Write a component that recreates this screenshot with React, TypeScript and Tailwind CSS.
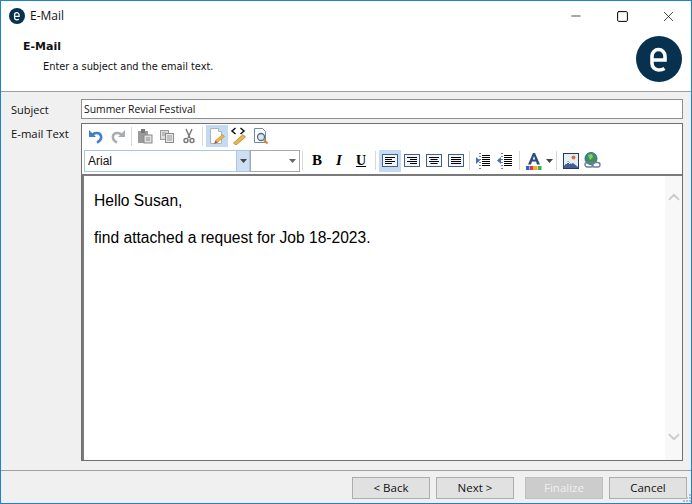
import React from 'react';
import { Minus, Square, X, ChevronUp, ChevronDown } from 'lucide-react';

// company logo, a round badge with the bent "e" mark
const Logo: React.FC<{ className: string }> = ({ className }) => (
  <svg viewBox="0 0 46 46" className={`${className} shrink-0`}>
    <circle cx="23" cy="23" r="23" fill="#07314f" />
    <path d="M16 24H29V20a6.500 6.500 0 0 0-13 0V27.500a6.500 6.500 0 0 0 6.500 6.500c2.500 0 4.500-.5 6-1.500" fill="none" stroke="#fff" strokeWidth="3.600" />
  </svg>
);

const Sep: React.FC<{ cls?: string }> = ({ cls = 'mx-[2px]' }) => <div className={`w-px h-[19px] bg-[#d8d8d8] shrink-0 ${cls}`} />;

// toolbar cell, 22px square with optional pressed state
const Tool: React.FC<{ on?: boolean; children: React.ReactNode }> = ({ on, children }) => (
  <div className={`w-[22px] h-[22px] flex items-center justify-center shrink-0 ${on ? 'bg-[#c4daf3]' : ''}`}>{children}</div>
);

const UndoIcon: React.FC<{ color: string; flip?: boolean }> = ({ color, flip }) => (
  <svg width="16" height="16" viewBox="0 0 16 16" className={flip ? '-scale-x-100' : ''}>
    <path d="M1 2v7h7z" fill={color} />
    <path d="M4 7.500c2-3.500 8-3.500 9 .5 .6 2.500-1 5-4 6.500" fill="none" stroke={color} strokeWidth="2.600" />
  </svg>
);
const PasteIcon = () => (
  <svg width="16" height="16" viewBox="0 0 16 16">
    <rect x="1" y="3" width="10" height="12" fill="#9a9a9a" />
    <rect x="4" y="1" width="4" height="4" fill="#777" />
    <rect x="7" y="7" width="8" height="8" fill="#e0e0e0" stroke="#8a8a8a" />
    <path d="M9 10h4M9 12h4" stroke="#8a8a8a" />
  </svg>
);
const CopyIcon = () => (
  <svg width="16" height="16" viewBox="0 0 16 16">
    <rect x="1.500" y="2.500" width="8" height="9" fill="#ddd" stroke="#999" />
    <rect x="6.500" y="5.500" width="8" height="9" fill="#e6e6e6" stroke="#8a8a8a" />
    <path d="M3 5h4M3 7h3M8 8h5M8 10h5M8 12h5" stroke="#9a9a9a" />
  </svg>
);
const CutIcon = () => (
  <svg width="16" height="16" viewBox="0 0 16 16" fill="none" stroke="#777" strokeWidth="1.400">
    <path d="M5 1l4 9M11 1L7 10" />
    <circle cx="5" cy="12.500" r="2" />
    <circle cx="11" cy="12.500" r="2" />
  </svg>
);
const DesignIcon = () => (
  <svg width="18" height="18" viewBox="0 0 18 18">
    <path d="M2.500 1.500h8l3 3v12h-11z" fill="#fff" stroke="#a8b4c2" />
    <path d="M10.500 1.500v3h3" fill="#e6edf5" stroke="#a8b4c2" />
    <path d="M7.500 13.500l7-6 2 2-7 6z" fill="#eab64a" stroke="#b98a30" strokeWidth="0.600" />
    <path d="M7.500 13.500l-1.500 3.500 3.500-1.500z" fill="#b5432f" />
  </svg>
);
const SourceIcon = () => (
  <svg width="18" height="18" viewBox="0 0 18 18" fill="none">
    <path d="M5.500 1L2 4l3.500 3M10.500 1L14 4l-3.500 3" stroke="#111" strokeWidth="1.500" />
    <path d="M3.500 16l9.500-8.500 2.500 2.500-9.500 8z" fill="#eab64a" stroke="#a97a26" strokeWidth="0.700" />
  </svg>
);
const PreviewIcon = () => (
  <svg width="18" height="18" viewBox="0 0 18 18" fill="none">
    <path d="M2.500 1.500h8l3 3v11h-11z" fill="#fff" stroke="#6d88a8" />
    <circle cx="9" cy="10" r="3.500" fill="#d6e6f5" stroke="#5a6d80" strokeWidth="1.300" />
    <path d="M11.500 12.500l4 4" stroke="#d08a30" strokeWidth="2.200" />
  </svg>
);

const Align: React.FC<{ kind: 'left' | 'right' | 'center' | 'full' }> = ({ kind }) => {
  const paths = {
    left: 'M3 4.500h10M3 6.500h7M3 8.500h10M3 10.500h7',
    right: 'M3 4.500h10M6 6.500h7M3 8.500h10M6 10.500h7',
    center: 'M3 4.500h10M4.500 6.500h7M3 8.500h10M4.500 10.500h7',
    full: 'M3 4.500h10M3 6.500h10M3 8.500h10M3 10.500h10',
  };
  return (
    <svg width="16" height="15" viewBox="0 0 16 15">
      <rect x="0.500" y="1.500" width="15" height="12" fill="#f2f6fb" stroke="#46607e" />
      <path d={paths[kind]} stroke="#000" />
    </svg>
  );
};

const Indent: React.FC<{ out?: boolean }> = ({ out }) => (
  <svg width="16" height="16" viewBox="0 0 16 16">
    <path d="M7 2.500h8M7 4.500h8M7 6.500h8M7 8.500h8M7 10.500h8M7 12.500h8" stroke="#000" />
    <path d="M5 0v16" stroke="#000" strokeDasharray="1 2" />
    <path d={out ? 'M0 7.500l4-3.500v7z' : 'M5 7.500L1 4v7z'} fill="#3c6fd0" />
  </svg>
);

const FontColor = () => (
  <svg width="16" height="18" viewBox="0 0 16 18">
    <path d="M2 12.500L7 1h2l5 11.500h-3l-1-3H6l-1 3z M6.800 7.500h2.400L8 4z" fill="#2b4a80" fillRule="evenodd" />
    <rect x="0" y="14" width="3.500" height="4" fill="#2f5fd0" />
    <rect x="4" y="14" width="3.500" height="4" fill="#e03a3a" />
    <rect x="8" y="14" width="3.500" height="4" fill="#f0b020" />
    <rect x="12" y="14" width="3.500" height="4" fill="#34b44a" />
  </svg>
);
const ImageIcon = () => (
  <svg width="16" height="16" viewBox="0 0 16 16">
    <rect x="0.500" y="0.500" width="15" height="15" fill="#e8eef6" stroke="#1f3a68" />
    <path d="M1 13l4-5 3 3 2-1 5 4v1H1z" fill="#3f5f96" />
    <path d="M3 11l2-2 2 2" stroke="#fff" fill="none" />
    <circle cx="10.500" cy="4.500" r="2" fill="#e0703a" />
  </svg>
);
const LinkIcon = () => (
  <svg width="17" height="17" viewBox="0 0 17 17">
    <circle cx="7" cy="6.500" r="6" fill="#3f8f5a" stroke="#3a6a9a" />
    <path d="M4 3l4-1 1 3-3 3z" fill="#7fd06a" />
    <rect x="1" y="10.500" width="8" height="4.500" rx="2.200" fill="none" stroke="#6a7f9a" strokeWidth="1.400" />
    <rect x="8" y="10.500" width="8" height="4.500" rx="2.200" fill="none" stroke="#6a7f9a" strokeWidth="1.400" />
  </svg>
);

const Caret = ({ color = '#444' }: { color?: string }) => (
  <svg width="7" height="4" viewBox="0 0 7 4"><path d="M0 0h7L3.500 4z" fill={color} /></svg>
);

const Btn: React.FC<{ label: string; disabled?: boolean; cls?: string }> = ({ label, disabled, cls = '' }) => (
  <div className={`w-[78px] h-[22px] border flex items-center justify-center text-[11.500px] ${disabled ? 'bg-[#cccccc] border-[#bfbfbf] text-[#f0f0f0]' : 'bg-[#e1e1e1] border-[#adadad] text-[#111]'} ${cls}`}>
    {label}
  </div>
);

export default function App() {
  return (
    <div className="relative w-[692px] h-[504px] border border-[#1883d7] bg-[#f0f0f0] flex flex-col overflow-hidden font-['Open_Sans',sans-serif] text-[#111]">
      <div className="bg-white h-[91px] border-b border-[#a0a0a0] shrink-0 flex flex-col">
        <div className="h-[30px] flex items-center pl-[8px] shrink-0">
          <Logo className="w-[16px] h-[16px]" />
          <span className="ml-[5px] text-[12px]">E-Mail</span>
          <div className="ml-auto flex items-center">
            <div className="w-[46px] flex justify-center"><Minus size={14} strokeWidth={1.200} className="text-black" /></div>
            <div className="w-[46px] flex justify-center"><Square size={13} strokeWidth={1} absoluteStrokeWidth className="text-black" /></div>
            <div className="w-[46px] flex justify-center"><X size={17} strokeWidth={1} className="text-black" /></div>
          </div>
        </div>
        <div className="flex flex-1 pl-[22px] pr-[9px]">
          <div className="flex-1">
            <div className="text-[11px] font-bold leading-[15px] mt-[8px] font-['DejaVu_Sans',sans-serif]">E-Mail</div>
            <div className="text-[9.800px] leading-[14px] mt-[6px] ml-[20px] font-['DejaVu_Sans',sans-serif]">Enter a subject and the email text.</div>
          </div>
          <Logo className="w-[46px] h-[46px] mt-[5px]" />
        </div>
      </div>

      <div className="flex-1 min-h-0 flex flex-col pl-[10px] pr-[8px] pt-[7px] pb-[9px]">
        <div className="flex items-center h-[20px] shrink-0">
          <span className="w-[70px] text-[11px] pt-[2px]">Subject</span>
          <div className="flex-1 h-full bg-white border border-[#8f8f8f] flex items-center pl-[2px] pt-[1px] text-[10.400px]">Summer Revial Festival</div>
        </div>
        <div className="flex flex-1 min-h-0 mt-[4px]">
          <span className="w-[70px] text-[11.300px] pt-[3px] shrink-0">E-mail Text</span>
          <div className="flex-1 flex flex-col bg-white border border-[#707070] min-w-0">
            <div className="flex items-center h-[24px] pl-[3px] shrink-0">
              <Tool><UndoIcon color="#3d7fd3" /></Tool>
              <Tool><UndoIcon color="#a9adb2" flip /></Tool>
              <Sep />
              <Tool><PasteIcon /></Tool>
              <Tool><CopyIcon /></Tool>
              <Tool><CutIcon /></Tool>
              <Sep cls="ml-[2px] mr-[3px]" />
              <Tool on><DesignIcon /></Tool>
              <Tool><SourceIcon /></Tool>
              <Tool><PreviewIcon /></Tool>
            </div>
            <div className="flex items-center h-[25px] pl-[2px] shrink-0">
              <div className="w-[166px] h-[22px] border border-[#a8c6e8] bg-white flex items-stretch">
                <div className="flex-1 flex items-center pl-[3px] text-[12px] font-['Liberation_Sans',sans-serif]">Arial</div>
                <div className="w-[13px] bg-[#cfdff2] border-l border-[#a8c6e8] flex items-center justify-center"><Caret /></div>
              </div>
              <div className="w-[50px] h-[22px] border border-[#a8a8a8] bg-white flex items-center justify-end pr-[3px]"><Caret color="#666" /></div>
              <Sep cls="ml-[2px] mr-[3px]" />
              <Tool><span className="font-['Liberation_Serif',serif] font-bold text-[15px] text-black">B</span></Tool>
              <Tool><span className="font-['Liberation_Serif',serif] font-bold italic text-[15px] text-black">I</span></Tool>
              <Tool><span className="font-['Liberation_Serif',serif] font-bold underline text-[14px] text-black">U</span></Tool>
              <Sep cls="mx-[3px]" />
              <Tool on><Align kind="left" /></Tool>
              <Tool><Align kind="right" /></Tool>
              <Tool><Align kind="center" /></Tool>
              <Tool><Align kind="full" /></Tool>
              <Sep />
              <Tool><Indent /></Tool>
              <Tool><Indent out /></Tool>
              <Sep cls="mx-[3px]" />
              <Tool><FontColor /></Tool>
              <div className="w-[8px] flex justify-center"><Caret /></div>
              <Sep cls="mx-[3px]" />
              <Tool><ImageIcon /></Tool>
              <div className="-ml-[1px]"><Tool><LinkIcon /></Tool></div>
            </div>
            <div className="flex-1 min-h-0 mt-[1px] border-t-2 border-l-2 border-[#7a7a7a] flex">
              <div className="flex-1 px-[10px] pt-[16px] text-[15.600px] leading-[18px] font-['Liberation_Sans',sans-serif] text-black">
                <p>Hello Susan,</p>
                <p className="mt-[19px]">find attached a request for Job 18-2023.</p>
              </div>
              <div className="w-[17px] bg-[#f8f8f8] flex flex-col items-center justify-between pt-[12px] pb-[14px]">
                <ChevronUp size={18} strokeWidth={2.500} className="text-[#cdcdcd]" />
                <ChevronDown size={18} strokeWidth={2.500} className="text-[#cdcdcd]" />
              </div>
            </div>
          </div>
        </div>
      </div>

      <div className="h-[33px] border-t border-[#a0a0a0] shrink-0 flex items-start justify-end pt-[6px] pr-[4px]">
        <Btn label="< Back" />
        <Btn label="Next >" cls="ml-[6px]" />
        <Btn label="Finalize" disabled cls="ml-[11px]" />
        <Btn label="Cancel" cls="ml-[6px]" />
      </div>
      {/* resize grip */}
      <svg width="10" height="10" viewBox="0 0 10 10" className="absolute right-0 bottom-0">
        <path d="M8 1h2v2H8zM5 4h2v2H5zM8 4h2v2H8zM2 7h2v2H2zM5 7h2v2H5zM8 7h2v2H8z" fill="#bdbdbd" />
      </svg>
    </div>
  );
}
